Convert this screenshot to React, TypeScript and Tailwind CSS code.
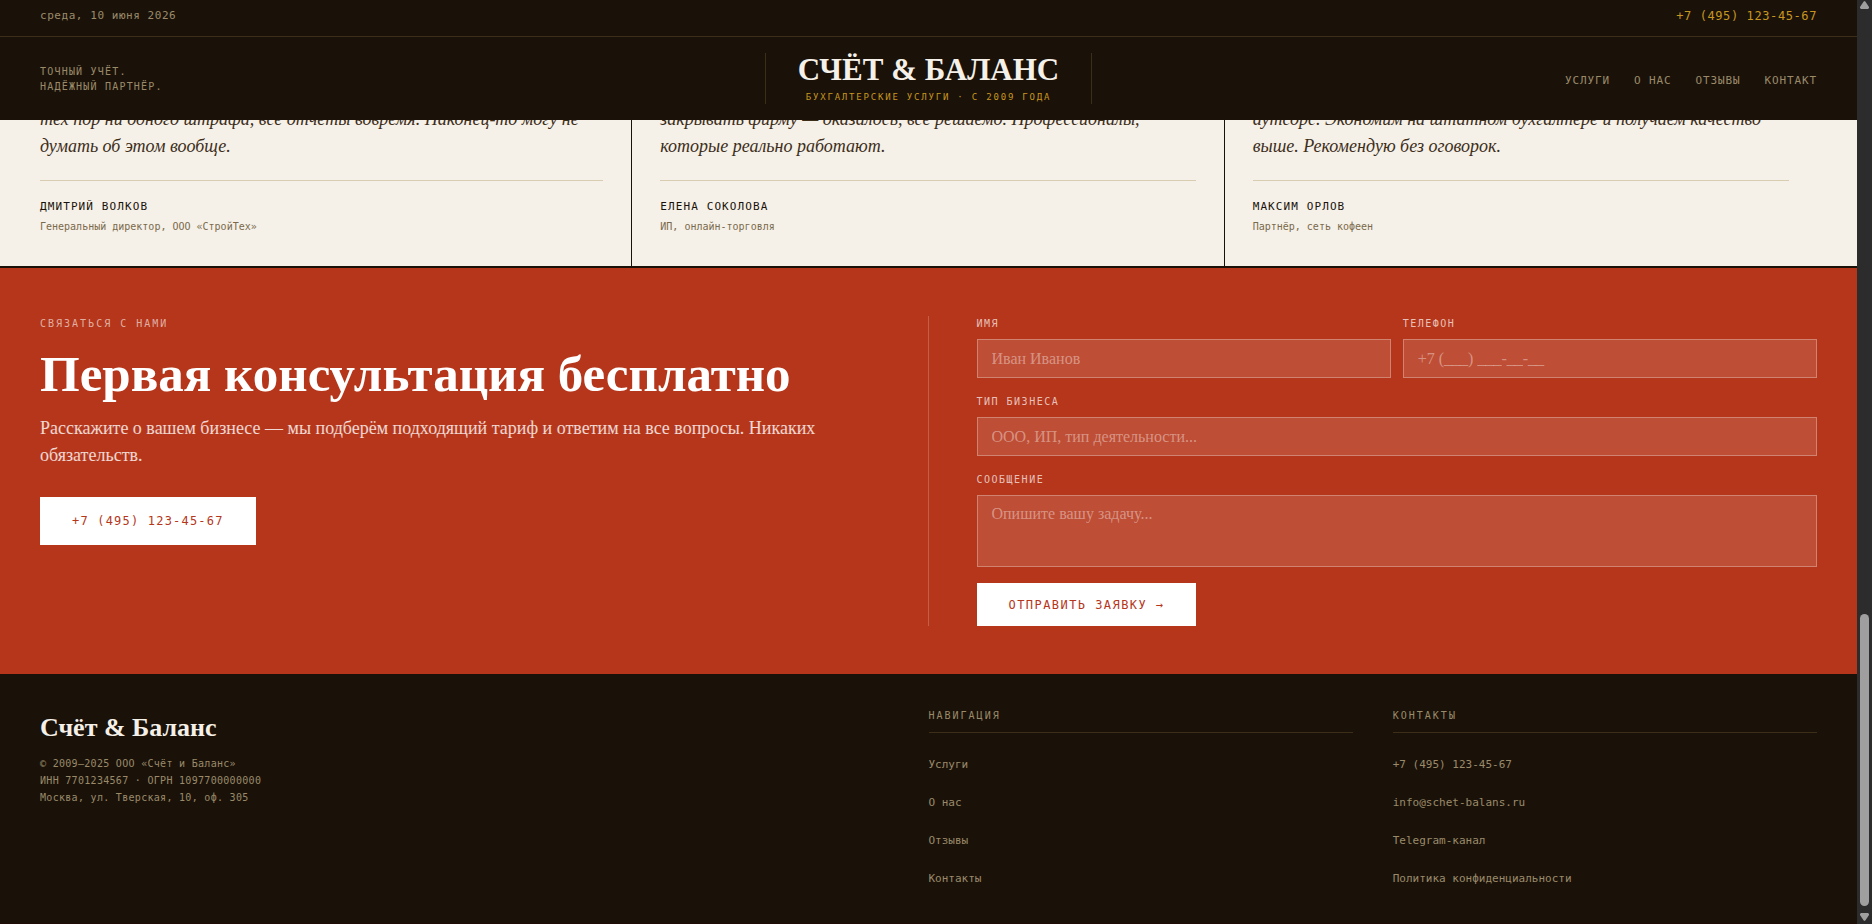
import { useState } from 'react'

const navLinks = [
    { label: 'Услуги', href: '#services' },
    { label: 'О нас', href: '#about' },
    { label: 'Отзывы', href: '#reviews' },
    { label: 'Контакт', href: '#contact' },
]

const reviews = [
    {
        lines: ['тех пор ни одного штрафа, все отчёты вовремя. Наконец-то могу не', 'думать об этом вообще.'],
        name: 'Дмитрий Волков',
        role: 'Генеральный директор, ООО «СтройТех»',
    },
    {
        lines: ['закрывать фирму — оказалось, всё решаемо. Профессионалы,', 'которые реально работают.'],
        name: 'Елена Соколова',
        role: 'ИП, онлайн-торговля',
    },
    {
        lines: ['аутсорс. Экономим на штатном бухгалтере и получаем качество', 'выше. Рекомендую без оговорок.'],
        name: 'Максим Орлов',
        role: 'Партнёр, сеть кофеен',
    },
]

const footerColumns = [
    { title: 'Навигация', links: ['Услуги', 'О нас', 'Отзывы', 'Контакты'] },
    { title: 'Контакты', links: ['+7 (495) 123-45-67', 'info@schet-balans.ru', 'Telegram-канал', 'Политика конфиденциальности'] },
]

const mono = "font-['DejaVu_Sans_Mono','Liberation_Mono',monospace]"
const serif = "font-['Liberation_Serif',serif]"
const fieldLabel = `${mono} mb-[7px] block text-[10px] leading-4 tracking-[0.15em] uppercase text-white/70`
const fieldInput = `${serif} block w-full rounded-none border border-white/30 bg-white/12 px-3.5 text-base text-white placeholder:text-white/40 outline-none focus:border-white`

function Header() {
    return (
        <header className="sticky top-0 z-10 bg-[#1a1209]">
            <div className={`${mono} flex h-[37px] items-center justify-between border-b border-[#3d2e1a] px-10 pb-1`}>
                <span className="text-[11px] leading-4 tracking-wider text-[#9a8a6a]">среда, 10 июня 2026</span>
                <a href="tel:+74951234567" className="text-xs tracking-wider text-[#c8961e]">+7 (495) 123-45-67</a>
            </div>
            <div className="grid grid-cols-[1fr_auto_1fr] items-center px-10 py-4">
                <p className={`${mono} text-[10px] leading-[15px] tracking-[0.12em] uppercase text-[#9a8a6a]`}>
                    Точный учёт.<br />Надёжный партнёр.
                </p>
                <div className="border-x border-[#3d2e1a] px-8 text-center">
                    <a href="#top" className={`${serif} block text-[31px] leading-[34px] font-bold uppercase text-[#f5f0e8]`}>Счёт &amp; Баланс</a>
                    <p className={`${mono} mt-1 text-[9px] leading-[13px] tracking-[0.2em] uppercase text-[#c8961e]`}>Бухгалтерские услуги · с 2009 года</p>
                </div>
                <nav className={`${mono} flex justify-end gap-6 pt-1 text-[11px] leading-4 tracking-[0.08em] uppercase text-[#9a8a6a]`}>
                    {navLinks.map((link) => (
                        <a key={link.href} href={link.href} className="hover:text-white">{link.label}</a>
                    ))}
                </nav>
            </div>
        </header>
    )
}

function Reviews() {
    return (
        <section id="reviews" className="-mt-3.5 border-b-2 border-[#1a1209] px-10">
            <div className="grid grid-cols-3">
                {reviews.map((review) => (
                    <article key={review.name} className="border-r border-[#1a1209] px-7 pb-[31px] first:pl-0 last:border-r-0">
                        <blockquote className={`${serif} mb-5 text-lg leading-[27px] whitespace-nowrap italic text-[#3d2e1a]`}>
                            {review.lines.map((line) => (
                                <p key={line}>{line}</p>
                            ))}
                        </blockquote>
                        <div className={`${mono} border-t border-[#d8cdb0] pt-[17px]`}>
                            <p className="text-[11px] leading-[18px] font-medium tracking-widest uppercase text-[#1a1209]">{review.name}</p>
                            <p className="mt-0.5 text-[10px] leading-[17px] text-[#7a6a4a]">{review.role}</p>
                        </div>
                    </article>
                ))}
            </div>
        </section>
    )
}

function Contact() {
    const [form, setForm] = useState({ name: '', phone: '', business: '', message: '' })

    return (
        <section id="contact" className="grid grid-cols-2 bg-[#b5361a] px-10 py-12">
            <div className="border-r border-white/20 pr-12">
                <p className={`${mono} text-[10px] leading-4 tracking-[0.2em] uppercase text-white/60`}>Связаться с нами</p>
                <h2 className={`${serif} mt-3.5 text-[51px] leading-[56px] font-bold text-white`}>Первая консультация бесплатно</h2>
                <p className={`${serif} mt-[13px] text-lg leading-[27px] text-white/80`}>
                    Расскажите о вашем бизнесе — мы подберём подходящий тариф и ответим на все вопросы. Никаких обязательств.
                </p>
                <a href="tel:+74951234567" className={`${mono} mt-7 inline-flex h-12 items-center bg-white px-8 text-xs tracking-widest text-[#b5361a]`}>
                    +7 (495) 123-45-67
                </a>
            </div>

            <form className="flex flex-col gap-4 pl-12" onSubmit={(e) => e.preventDefault()}>
                <div className="grid grid-cols-2 gap-3">
                    <div>
                        <label htmlFor="name" className={fieldLabel}>Имя</label>
                        <input id="name" type="text" placeholder="Иван Иванов" className={`${fieldInput} h-[39px]`}
                            value={form.name} onChange={(e) => setForm({ ...form, name: e.target.value })} />
                    </div>
                    <div>
                        <label htmlFor="phone" className={fieldLabel}>Телефон</label>
                        <input id="phone" type="tel" placeholder="+7 (___) ___-__-__" className={`${fieldInput} h-[39px]`}
                            value={form.phone} onChange={(e) => setForm({ ...form, phone: e.target.value })} />
                    </div>
                </div>
                <div>
                    <label htmlFor="business" className={fieldLabel}>Тип бизнеса</label>
                    <input id="business" type="text" placeholder="ООО, ИП, тип деятельности..." className={`${fieldInput} h-[39px]`}
                        value={form.business} onChange={(e) => setForm({ ...form, business: e.target.value })} />
                </div>
                <div>
                    <label htmlFor="message" className={fieldLabel}>Сообщение</label>
                    <textarea id="message" placeholder="Опишите вашу задачу..." className={`${fieldInput} h-[72px] resize-none py-1.5 leading-6`}
                        value={form.message} onChange={(e) => setForm({ ...form, message: e.target.value })} />
                </div>
                <button type="submit" className={`${mono} h-[43px] self-start bg-white px-8 text-xs tracking-[0.12em] uppercase text-[#b5361a]`}>
                    Отправить заявку →
                </button>
            </form>
        </section>
    )
}

function Footer() {
    return (
        <footer className="grid flex-1 grid-cols-[2fr_1fr_1fr] gap-10 border-b border-[#200c06] bg-[#1a1209] px-10 pt-[34px] pb-7 text-[#9a8a6a]">
            <div>
                <p className={`${serif} mt-1 text-[26px] leading-8 font-bold text-[#f5f0e8]`}>Счёт &amp; Баланс</p>
                <p className={`${mono} mt-[11px] text-[10px] leading-[17px] tracking-[0.03em]`}>
                    © 2009–2025 ООО «Счёт и Баланс»<br />
                    ИНН 7701234567 · ОГРН 1097700000000<br />
                    Москва, ул. Тверская, 10, оф. 305
                </p>
            </div>
            {footerColumns.map((column) => (
                <div key={column.title} className={mono}>
                    <h3 className="mb-[18px] border-b border-[#3d2e1a] pb-2 text-[10px] leading-4 tracking-[0.2em] uppercase">{column.title}</h3>
                    <ul className="flex flex-col gap-2.5 text-[11px] leading-7">
                        {column.links.map((link) => (
                            <li key={link}><a href="#top" className="hover:text-white">{link}</a></li>
                        ))}
                    </ul>
                </div>
            ))}
        </footer>
    )
}

function ScrollTrack() {
    return (
        <div className="sticky top-0 flex h-screen w-[15px] shrink-0 flex-col items-center bg-[#2c2c2c] py-px text-[#9f9f9f]">
            <svg viewBox="0 0 9 8" className="h-2 w-[9px]" fill="currentColor"><path d="M4.5 0 L5.5 0.7 L9 6 V7 L8 8 H1 L0 7 V6 L3.5 0.7 Z" /></svg>
            <div className="mt-auto h-[292px] w-[9px] rounded-full bg-[#9f9f9f]" />
            <svg viewBox="0 0 9 8" className="mt-[7px] mb-0.5 h-2 w-[9px]" fill="currentColor"><path d="M4.5 8 L5.5 7.3 L9 2 V1 L8 0 H1 L0 1 V2 L3.5 7.3 Z" /></svg>
        </div>
    )
}

export default function App() {
    return (
        <div id="top" className="flex min-h-screen bg-[#f5f0e8]">
            <div className="flex min-w-0 flex-1 flex-col">
                <Header />
                <Reviews />
                <Contact />
                <Footer />
            </div>
            <ScrollTrack />
        </div>
    )
}
